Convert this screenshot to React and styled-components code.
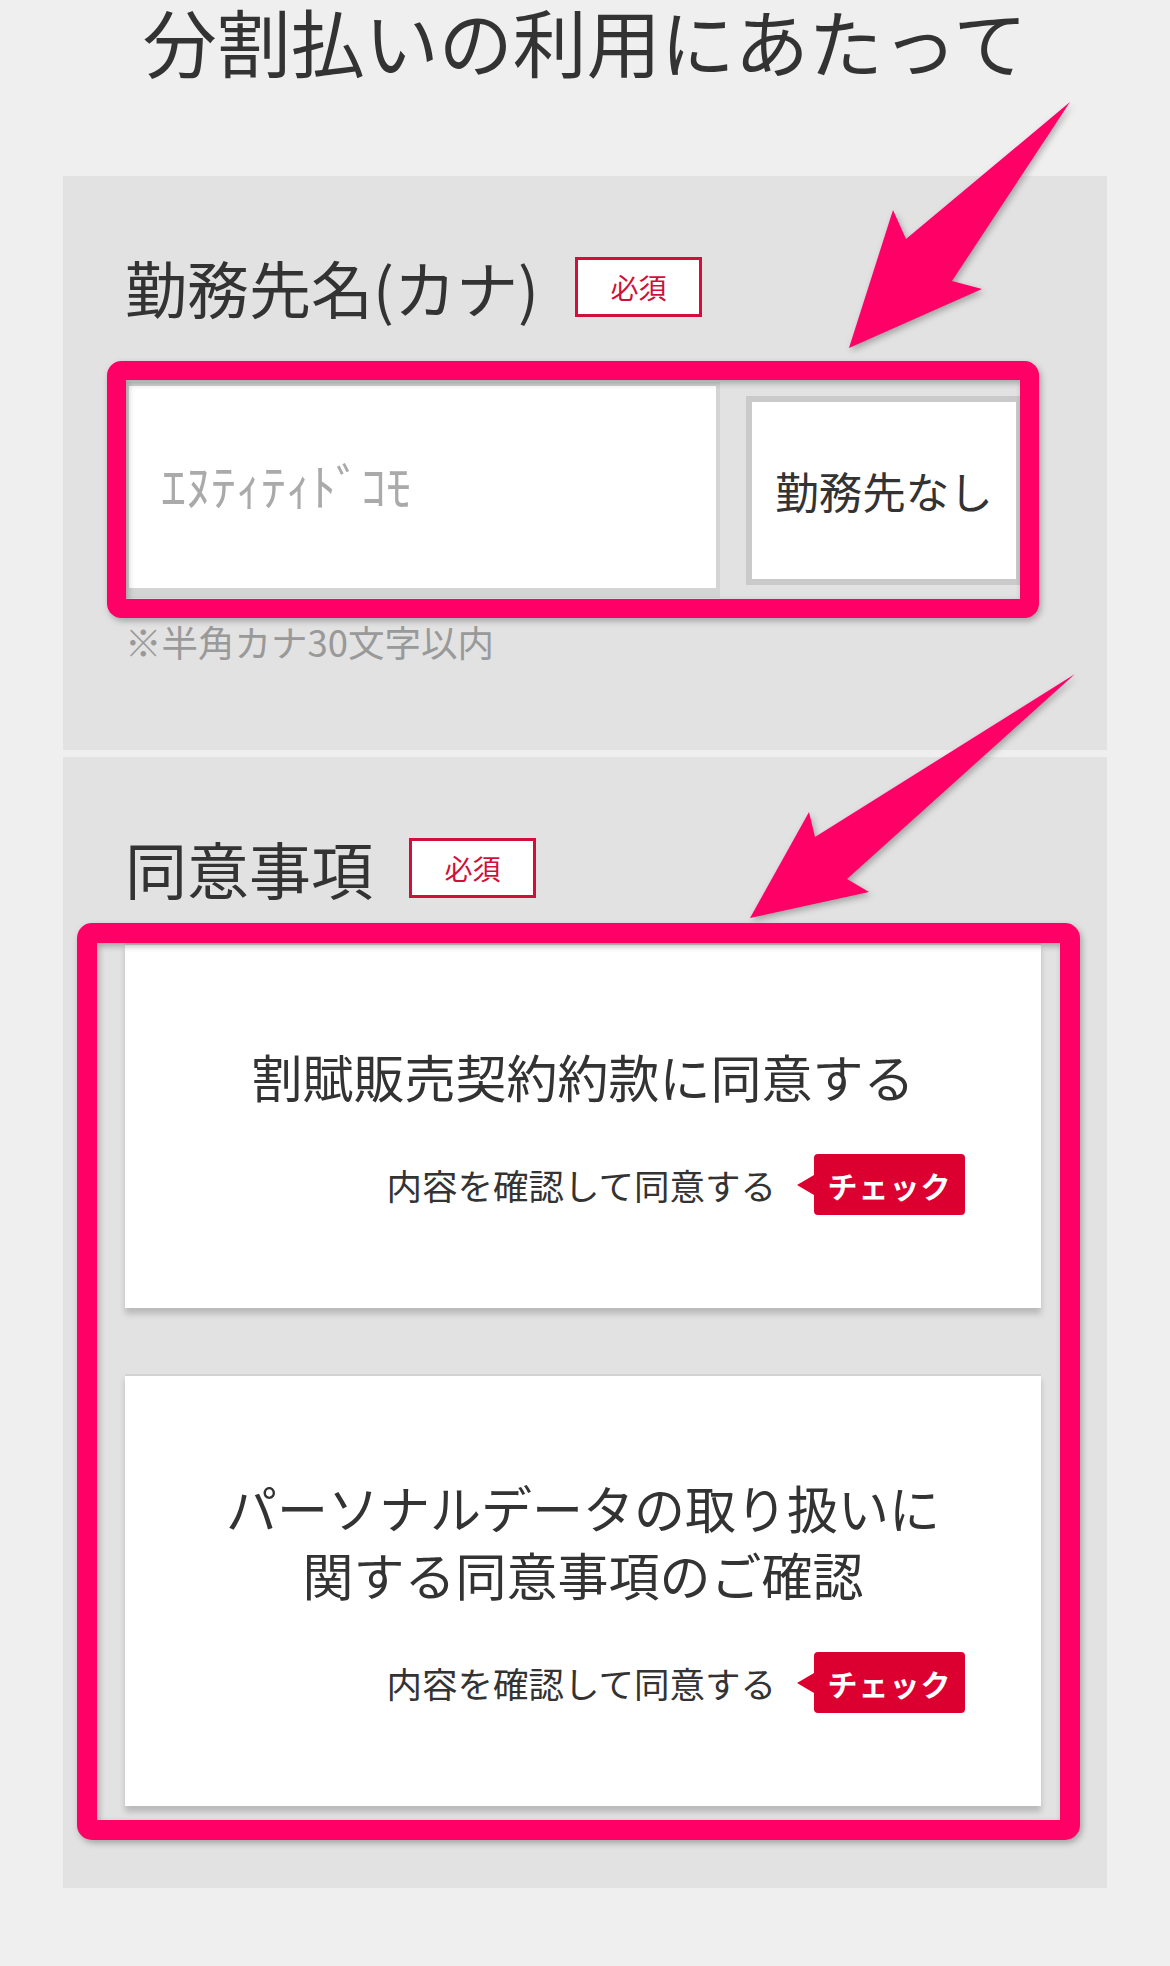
import React from 'react';
import styled, { createGlobalStyle } from 'styled-components';

const GlobalStyle = createGlobalStyle`
	html, body {
		margin: 0;
		padding: 0;
		background: #efefef;
	}

	body {
		font-family: 'Noto Sans CJK JP', 'Noto Sans', sans-serif;
		color: #333;
	}
`;

const Page = styled.div`
	position: relative;
	width: 1170px;
	min-height: 1966px;
	background: #efefef;
`;

const Header = styled.header`
	height: 176px;
`;

const Title = styled.h1`
	margin: 0;
	font-size: 74px;
	font-weight: 400;
	line-height: 80px;
	text-align: center;
	color: #333;
	letter-spacing: 0;
`;

const Panel = styled.section`
	margin: ${(p) => (p.$first ? '0' : '7px')} 63px 0;
	padding: 80px 62px ${(p) => p.$bottom}px;
	background: #e2e2e2;
`;

const LabelRow = styled.div`
	display: flex;
	align-items: center;
	gap: 36px;
	height: 62px;
`;

const Label = styled.h2`
	margin: 0;
	font-size: 62px;
	font-weight: 400;
	line-height: 62px;
	color: #333;
`;

const Required = styled.span`
	display: flex;
	align-items: center;
	justify-content: center;
	box-sizing: border-box;
	width: 127px;
	height: 60px;
	border: 3px solid #d0103a;
	background: #fff;
	color: #d0103a;
	font-size: 28px;
`;

const InputRow = styled.div`
	display: flex;
	align-items: center;
	gap: 26px;
	margin-top: 64px;
`;

const KanaInput = styled.input`
	box-sizing: border-box;
	width: 595px;
	height: 216px;
	padding: 0 0 6px 32px;
	border: 4px solid #d4d4d4;
	border-bottom-width: 10px;
	background: #fff;
	font-family: inherit;
	font-size: 50px;
	color: #333;
	outline: none;

	&::placeholder {
		color: #aaa;
	}
`;

const NoWorkButton = styled.button`
	box-sizing: border-box;
	width: 276px;
	height: 189px;
	border: 6px solid #cacaca;
	background: #fff;
	font-family: inherit;
	font-size: 43.5px;
	color: #333;
	padding: 0;
`;

const Hint = styled.p`
	margin: 22px 0 0;
	font-size: 36.5px;
	line-height: 43px;
	color: #999;
`;

const CardList = styled.div`
	display: flex;
	flex-direction: column;
	gap: 66px;
	margin-top: 44px;
`;

const Card = styled.div`
	width: 916px;
	box-sizing: border-box;
	padding: 98px 76px 93px;
	background: #fff;
	border-top: 2px solid #d2d2d2;
	box-shadow: 0 6px 6px rgba(0, 0, 0, 0.18);
`;

const CardTitle = styled.h3`
	margin: 0;
	font-size: 51px;
	font-weight: 400;
	line-height: 67px;
	text-align: center;
	color: #333;
`;

const ConfirmRow = styled.div`
	display: flex;
	justify-content: flex-end;
	align-items: center;
	gap: 38px;
	margin-top: 44px;
`;

const ConfirmText = styled.span`
	font-size: 35.5px;
	color: #333;
`;

const CheckBadge = styled.span`
	position: relative;
	display: flex;
	align-items: center;
	justify-content: center;
	width: 151px;
	height: 61px;
	border-radius: 4px;
	background: #dc0030;
	color: #fff;
	font-size: 30px;
	font-weight: 700;
	letter-spacing: 1px;

	&::before {
		content: '';
		position: absolute;
		left: -17px;
		top: 50%;
		margin-top: -10px;
		border-right: 17px solid #dc0030;
		border-top: 10px solid transparent;
		border-bottom: 10px solid transparent;
	}
`;

const Overlay = styled.svg`
	position: absolute;
	top: 0;
	left: 0;
	width: 1170px;
	height: 1966px;
	pointer-events: none;
	filter: drop-shadow(2px 3px 3px rgba(0, 0, 0, 0.28));
`;

const PINK = '#ff0066';

const arrows = [
	'1070,102 952,281 982,289 849,348 893,210 906,239',
	'1075,674 847,879 869,892 750,918 809,812 815,837',
];

function Annotations() {
	return (
		<Overlay viewBox='0 0 1170 1966'>
			<rect x='116.5' y='370.5' width='913' height='238' rx='5' fill='none' stroke={PINK} strokeWidth='19' />
			<rect x='87' y='933' width='983' height='897' rx='5' fill='none' stroke={PINK} strokeWidth='20' />
			{arrows.map((pts) => (
				<polygon key={pts} points={pts} fill={PINK} />
			))}
		</Overlay>
	);
}

function Agreement({ title }) {
	return (
		<Card>
			<CardTitle>{title}</CardTitle>
			<ConfirmRow>
				<ConfirmText>内容を確認して同意する</ConfirmText>
				<CheckBadge>チェック</CheckBadge>
			</ConfirmRow>
		</Card>
	);
}

export default function App() {
	return (
		<Page>
			<GlobalStyle />
			<Header>
				<Title>分割払いの利用にあたって</Title>
			</Header>

			<Panel $first $bottom={87}>
				<LabelRow>
					<Label>勤務先名(カナ)</Label>
					<Required>必須</Required>
				</LabelRow>
				<InputRow>
					<KanaInput placeholder='ｴﾇﾃｨﾃｨﾄﾞｺﾓ' />
					<NoWorkButton>勤務先なし</NoWorkButton>
				</InputRow>
				<Hint>※半角カナ30文字以内</Hint>
			</Panel>

			<Panel $bottom={82}>
				<LabelRow>
					<Label>同意事項</Label>
					<Required>必須</Required>
				</LabelRow>
				<CardList>
					<Agreement title='割賦販売契約約款に同意する' />
					<Agreement
						title={
							<>
								パーソナルデータの取り扱いに
								<br />
								関する同意事項のご確認
							</>
						}
					/>
				</CardList>
			</Panel>

			<Annotations />
		</Page>
	);
}
